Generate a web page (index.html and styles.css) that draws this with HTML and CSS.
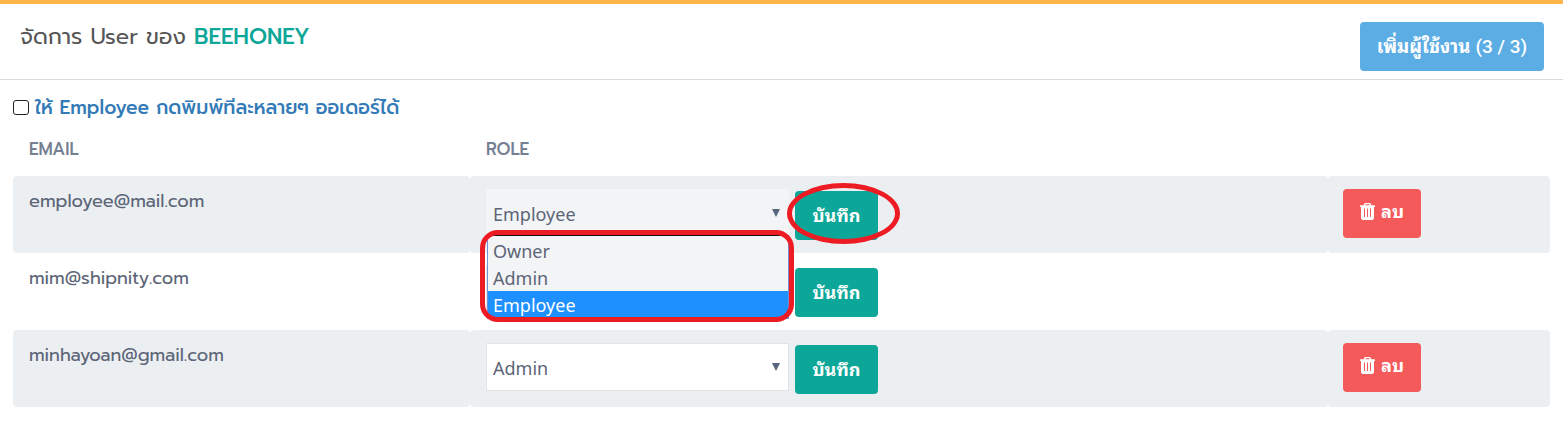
FILE: index.html
```html
<!DOCTYPE html>
<html lang="th">
<head>
  <meta charset="UTF-8" />
  <meta name="viewport" content="width=device-width, initial-scale=1" />
  <title>จัดการ User</title>
  <link rel="stylesheet" href="styles.css">
</head>
<body>
  <header class="page-head">
    <h1>จัดการ User ของ <strong>BEEHONEY</strong></h1>
    <button class="btn btn-add">เพิ่มผู้ใช้งาน <span class="add-count">(3 / 3)</span></button>
  </header>

  <main class="content">
    <label class="option">
      <input type="checkbox">
      <span>ให้ Employee กดพิมพ์ทีละหลายๆ ออเดอร์ได้</span>
    </label>

    <table class="users">
      <thead>
        <tr><th class="col-email">EMAIL</th><th class="col-role">ROLE</th><th class="col-action"></th></tr>
      </thead>
      <tbody>
        <tr>
          <td>employee@mail.com</td>
          <td>
            <div class="role">
              <div class="select open">Employee<i class="arrow"></i>
                <ul class="menu">
                  <li>Owner</li>
                  <li>Admin</li>
                  <li class="active">Employee</li>
                </ul>
                <div class="mark-menu"></div>
              </div>
              <button class="btn btn-save">บันทึก</button>
              <div class="mark-save"></div>
            </div>
          </td>
          <td>
            <button class="btn btn-delete">
              <svg class="trash" viewBox="0 0 15 17"><path fill="#fff" fill-rule="evenodd" d="M5.500 0h4Q10.500 0 10.900 1L11.300 2.200H14.500Q15 2.200 15 2.700V4H14V15q0 2-2 2H3q-2 0-2-2V4H0V2.700Q0 2.200.5 2.200H3.700L4.100 1Q4.500 0 5.500 0zM5.600 1.300 5.300 2.200h4.400l-.3-.9zM4 5.500v8.500h1V5.500zM7 5.500v8.500h1V5.500zM10 5.500v8.500h1V5.500z"/></svg>
              <span>ลบ</span>
            </button>
          </td>
        </tr>
        <tr>
          <td>mim@shipnity.com</td>
          <td>
            <div class="role">
              <div class="select"></div>
              <button class="btn btn-save">บันทึก</button>
            </div>
          </td>
          <td></td>
        </tr>
        <tr>
          <td>minhayoan@gmail.com</td>
          <td>
            <div class="role">
              <div class="select">Admin<i class="arrow"></i></div>
              <button class="btn btn-save">บันทึก</button>
            </div>
          </td>
          <td>
            <button class="btn btn-delete">
              <svg class="trash" viewBox="0 0 15 17"><path fill="#fff" fill-rule="evenodd" d="M5.500 0h4Q10.500 0 10.900 1L11.300 2.200H14.500Q15 2.200 15 2.700V4H14V15q0 2-2 2H3q-2 0-2-2V4H0V2.700Q0 2.200.5 2.200H3.700L4.100 1Q4.500 0 5.500 0zM5.600 1.300 5.300 2.200h4.400l-.3-.9zM4 5.500v8.500h1V5.500zM7 5.500v8.500h1V5.500zM10 5.500v8.500h1V5.500z"/></svg>
              <span>ลบ</span>
            </button>
          </td>
        </tr>
      </tbody>
    </table>
  </main>
</body>
</html>
```

FILE: styles.css
```css
:root {
  --teal: #0ca799;
  --red: #ed1c24;
  --row: #ebeff2;
  --text: #5c6577;
}
* { box-sizing: border-box; }
body {
  margin: 0;
  background: #fff;
  color: var(--text);
  font-family: Prompt, Lato, "Noto Sans", "Noto Sans Thai", sans-serif;
  font-size: 18px;
}
.page-head {
  display: flex;
  justify-content: space-between;
  align-items: flex-start;
  height: 80px;
  padding: 18px 19px 0 20px;
  border-top: 4px solid #ffb74d;
  border-bottom: 1px solid #d9dadb;
}
h1 {
  margin: 0;
  font-size: 22px;
  line-height: 29px;
  font-weight: 400;
  color: #555;
  white-space: nowrap;
}
h1 strong { color: var(--teal); font-weight: 500; }
.btn {
  height: 49px;
  border: 0;
  border-radius: 4px;
  padding: 0 0 4px;
  color: #fff;
  font-family: "Liberation Sans", "Noto Sans Thai Looped", "Noto Looped Thai", Loma, Sarabun, Garuda, Waree, "Noto Sans Thai", sans-serif;
  font-size: 18px;
  font-weight: 700;
  white-space: nowrap;
}
.btn-add { width: 184px; font-size: 18.5px; background: #5dade5; }
.add-count { font-family: Roboto, sans-serif; font-size: 19px; font-weight: 500; }
.content { padding: 14px 13px 0; }
.option {
  display: flex;
  align-items: center;
  gap: 6px;
  height: 27px;
  color: #337ab7;
  font-size: 19px;
  font-weight: 500;
  white-space: nowrap;
}
.option input {
  appearance: none;
  width: 16px;
  height: 15px;
  margin: 0 0 1px;
  border: 1px solid #222;
  border-radius: 3px;
}
.users {
  width: 1537px;
  table-layout: fixed;
  border-collapse: separate;
  border-spacing: 0;
}
.col-email { width: 457px; }
.col-role { width: 858px; }
.col-action { width: 222px; }
.users th {
  height: 55px;
  padding: 0 16px;
  text-align: left;
  font-size: 17px;
  font-weight: 500;
  color: #758092;
}
.users td {
  height: 77px;
  padding: 13px 16px 0;
  vertical-align: top;
  line-height: 24px;
  border-radius: 4px;
}
.users td:last-child { padding-left: 15px; }
.users tbody tr:nth-child(odd) td { background: var(--row); }
.role {
  position: relative;
  display: flex;
  align-items: flex-start;
  gap: 6px;
}
.select {
  position: relative;
  display: flex;
  align-items: center;
  justify-content: space-between;
  width: 303px;
  height: 48px;
  padding: 2px 8px 0 6px;
  background: #fff;
  border: 1px solid #e3e4e5;
  font-family: "Noto Sans", sans-serif;
  font-size: 18px;
}
.select.open { background: #f3f4f6; border-color: #f3f4f6; }
.arrow {
  margin-top: -3px;
  border: 4px solid transparent;
  border-top: 8px solid #56657a;
  border-bottom: 0;
}
.menu {
  position: absolute;
  z-index: 2;
  left: 0;
  top: 45px;
  width: 302px;
  margin: 0;
  padding: 1px 0 0;
  list-style: none;
  background: #f3f4f6;
  border: 1px solid #6f93d6;
  border-top-color: #111;
}
.menu li { height: 27px; line-height: 29px; padding-left: 5px; }
.menu .active { background: #1e90ff; color: #fff; }
.mark-menu {
  position: absolute;
  z-index: 3;
  left: -7px;
  top: 40px;
  width: 314px;
  height: 92px;
  border: 5px solid var(--red);
  border-radius: 18px;
}
.btn-save { width: 83px; margin-top: 2px; background: var(--teal); }
.mark-save {
  position: absolute;
  left: 301px;
  top: -6px;
  width: 113px;
  height: 61px;
  border: 5px solid var(--red);
  border-radius: 50%;
}
.btn-delete {
  display: flex;
  align-items: center;
  gap: 6px;
  width: 78px;
  padding: 0 0 4px 17px;
  background: #f55a5b;
}
.btn-delete span { padding-bottom: 4px; }
.trash { width: 15px; height: 17px; }
```
